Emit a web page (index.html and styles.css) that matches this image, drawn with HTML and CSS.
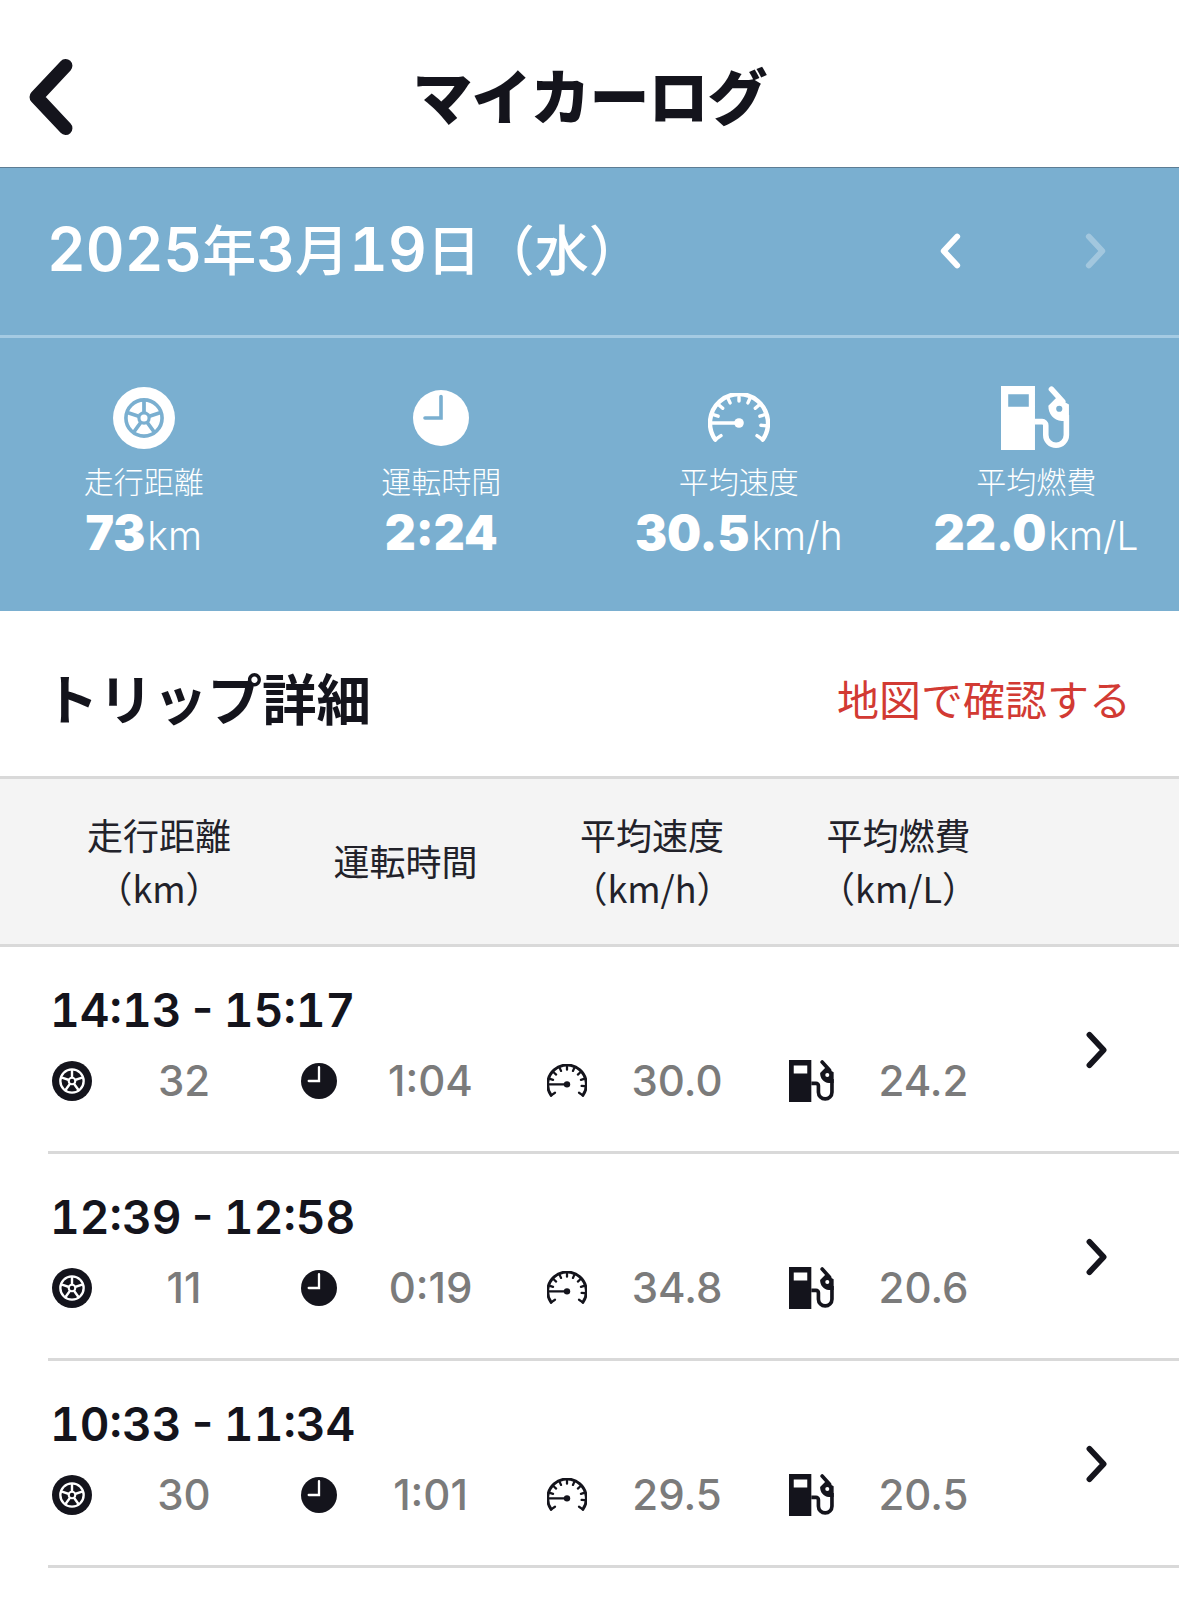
FILE: index.html
```html
<!DOCTYPE html>
<html lang="ja">
<head>
    <meta charset="UTF-8">
    <meta name="viewport" content="width=device-width, initial-scale=1.0">
    <title>マイカーログ</title>
    <link rel="stylesheet" href="styles.css">
</head>
<body>
    <svg class="sprite" width="0" height="0">
        <symbol id="i-tire" viewBox="0 0 60 60">
            <circle cx="30" cy="30" r="30" fill="currentColor"/>
            <circle cx="30" cy="30" r="17.5" fill="none" stroke="var(--bg)" stroke-width="3.5"/>
            <path d="M30 30V13M30 30L46.2 24.7M30 30L40 43.8M30 30L20 43.8M30 30L13.8 24.7" stroke="var(--bg)" stroke-width="3.6"/>
            <circle cx="30" cy="30" r="6.5" fill="var(--bg)"/>
            <circle cx="30" cy="30" r="3.4" fill="currentColor"/>
        </symbol>
        <symbol id="i-clock" viewBox="0 0 56 56">
            <circle cx="28" cy="28" r="28" fill="currentColor"/>
            <path d="M28 6.5V28H12" fill="none" stroke="var(--bg)" stroke-width="3.6" stroke-linecap="round"/>
        </symbol>
        <symbol id="i-gauge" viewBox="0 0 60 50">
            <g fill="none" stroke="currentColor" stroke-linecap="round">
                <path d="M6.2 46.6A29 29 0 1 1 53.8 46.6" stroke-width="4.4"/>
                <path d="M30 4V8M41 5.3L38.9 9.9M19 5.3L21.1 9.9M50.1 11.9L46.3 15.3M9.9 11.9L13.7 15.3M55.7 21.7L50.9 23.2M4.3 21.7L9.1 23.2M56.9 32.8L51.9 32.3M53.8 46.6L48 42.6M6.2 46.6L12 42.6" stroke-width="3.4"/>
                <path d="M2 30H30" stroke-width="3.6"/>
            </g>
            <circle cx="30" cy="30" r="4.8" fill="currentColor"/>
        </symbol>
        <symbol id="i-pump" viewBox="0 0 68 62">
            <path fill-rule="evenodd" fill="currentColor" d="M0 0H33V62H0ZM7 8V20H27V8Z"/>
            <path d="M33 34.5H40A3.5 3.5 0 0 1 43.5 38V47.5A10 10 0 0 0 63.5 47.5V28" fill="none" stroke="currentColor" stroke-width="5.4"/>
            <path d="M49 3L60 15" fill="none" stroke="currentColor" stroke-width="5.4" stroke-linecap="round"/>
            <path fill-rule="evenodd" fill="currentColor" d="M46 19L54 11L66 18V34H59C51 33 46 27 46 19ZM56.6 19A3 3 0 1 0 56.6 25A3 3 0 1 0 56.6 19Z"/>
        </symbol>
        <symbol id="i-left" viewBox="0 0 24 40">
            <path class="chevron" d="M20 4L5 20L20 36"/>
        </symbol>
        <symbol id="i-right" viewBox="0 0 24 40">
            <path class="chevron" d="M4 4L19 20L4 36"/>
        </symbol>
    </svg>

    <header class="app-bar">
        <svg class="back-icon"><use href="#i-left"/></svg>
        <h1>マイカーログ</h1>
    </header>

    <section class="summary">
        <div class="date-row">
            <div class="date">2025<span>年</span>3<span>月</span>19<span>日（水）</span></div>
            <svg class="date-nav"><use href="#i-left"/></svg>
            <svg class="date-nav is-off"><use href="#i-right"/></svg>
        </div>
        <div class="stats">
            <div class="stat">
                <div class="stat-icon"><svg class="s-tire"><use href="#i-tire"/></svg></div>
                <div class="stat-label">走行距離</div>
                <div class="stat-value">73<span>km</span></div>
            </div>
            <div class="stat">
                <div class="stat-icon"><svg class="s-clock"><use href="#i-clock"/></svg></div>
                <div class="stat-label">運転時間</div>
                <div class="stat-value">2:24</div>
            </div>
            <div class="stat">
                <div class="stat-icon"><svg class="s-gauge"><use href="#i-gauge"/></svg></div>
                <div class="stat-label">平均速度</div>
                <div class="stat-value">30.5<span>km/h</span></div>
            </div>
            <div class="stat">
                <div class="stat-icon"><svg class="s-pump"><use href="#i-pump"/></svg></div>
                <div class="stat-label">平均燃費</div>
                <div class="stat-value">22.0<span>km/L</span></div>
            </div>
        </div>
    </section>

    <div class="section-head">
        <h2>トリップ詳細</h2>
        <a class="map-link">地図で確認する</a>
    </div>

    <div class="table-head">
        <div>走行距離<br>（km）</div>
        <div>運転時間</div>
        <div>平均速度<br>（km/h）</div>
        <div>平均燃費<br>（km/L）</div>
    </div>

    <div class="trip">
        <div class="trip-body">
            <div class="trip-time">14:13 - 15:17</div>
            <div class="metrics">
                <div class="metric"><svg class="m-tire"><use href="#i-tire"/></svg><span>32</span></div>
                <div class="metric"><svg class="m-clock"><use href="#i-clock"/></svg><span>1:04</span></div>
                <div class="metric"><svg class="m-gauge"><use href="#i-gauge"/></svg><span>30.0</span></div>
                <div class="metric"><svg class="m-pump"><use href="#i-pump"/></svg><span>24.2</span></div>
            </div>
        </div>
        <svg class="trip-arrow"><use href="#i-right"/></svg>
    </div>
    <div class="trip">
        <div class="trip-body">
            <div class="trip-time">12:39 - 12:58</div>
            <div class="metrics">
                <div class="metric"><svg class="m-tire"><use href="#i-tire"/></svg><span>11</span></div>
                <div class="metric"><svg class="m-clock"><use href="#i-clock"/></svg><span>0:19</span></div>
                <div class="metric"><svg class="m-gauge"><use href="#i-gauge"/></svg><span>34.8</span></div>
                <div class="metric"><svg class="m-pump"><use href="#i-pump"/></svg><span>20.6</span></div>
            </div>
        </div>
        <svg class="trip-arrow"><use href="#i-right"/></svg>
    </div>
    <div class="trip">
        <div class="trip-body">
            <div class="trip-time">10:33 - 11:34</div>
            <div class="metrics">
                <div class="metric"><svg class="m-tire"><use href="#i-tire"/></svg><span>30</span></div>
                <div class="metric"><svg class="m-clock"><use href="#i-clock"/></svg><span>1:01</span></div>
                <div class="metric"><svg class="m-gauge"><use href="#i-gauge"/></svg><span>29.5</span></div>
                <div class="metric"><svg class="m-pump"><use href="#i-pump"/></svg><span>20.5</span></div>
            </div>
        </div>
        <svg class="trip-arrow"><use href="#i-right"/></svg>
    </div>
</body>
</html>
```

FILE: styles.css
```css
body {
    margin: 0;
    height: 1608px;
    overflow: hidden;
    background: #fff;
    color: #14141c;
    font-family: Inter, "Noto Sans CJK JP", sans-serif;
    --bg: #fff;
}
.sprite {
    position: absolute;
}
.chevron {
    fill: none;
    stroke: currentColor;
    stroke-width: var(--chevron-width, 6);
    stroke-linecap: round;
    stroke-linejoin: round;
}
.app-bar {
    height: 168px;
    box-sizing: border-box;
    padding-top: 58px;
    position: relative;
    border-bottom: 1px solid #5d7d94;
}
.back-icon {
    position: absolute;
    left: 22px;
    top: 58px;
    width: 56px;
    height: 78px;
    --chevron-width: 7;
}
h1 {
    margin: 0;
    text-align: center;
    font-family: "Noto Sans CJK JP", sans-serif;
    font-size: 60px;
    font-weight: 900;
    line-height: 72px;
    letter-spacing: -1px;
}
.summary {
    height: 443px;
    background: #7aafd0;
    color: #fff;
    --bg: #7aafd0;
}
.date-row {
    height: 170px;
    box-sizing: border-box;
    padding: 0 69px 2px 47px;
    display: flex;
    align-items: center;
    border-bottom: 3px solid #a5cbe3;
}
.date {
    flex: 1;
    margin-bottom: 6px;
    font-size: 60px;
    font-weight: 600;
    font-variant-numeric: tabular-nums;
}
.date span {
    font-family: "Noto Sans CJK JP", sans-serif;
    font-size: 54px;
    font-weight: 500;
}
.date-nav {
    width: 28px;
    height: 36px;
    margin-left: 118px;
    --chevron-width: 6.5;
}
.date-nav.is-off {
    opacity: 0.3;
}
.stats {
    display: grid;
    grid-template-columns: repeat(4, 297.5px);
    margin-left: -5px;
    padding-top: 45px;
}
.stat {
    text-align: center;
}
.stat-icon {
    height: 70px;
    display: flex;
    align-items: center;
    justify-content: center;
}
.s-tire {
    width: 62px;
    height: 62px;
}
.s-clock {
    width: 56px;
    height: 56px;
}
.s-gauge {
    width: 62px;
    height: 50px;
}
.s-pump {
    width: 70px;
    height: 64px;
}
.stat-label {
    margin-top: 7px;
    font-family: "Noto Sans CJK JP", sans-serif;
    font-size: 30px;
    font-weight: 300;
    line-height: 40px;
}
.stat-value {
    margin-top: 5px;
    font-size: 48px;
    font-weight: 900;
    line-height: 56px;
    white-space: nowrap;
}
.stat-value span {
    margin-left: 2px;
    font-size: 39px;
    font-weight: 300;
}
.section-head {
    height: 165px;
    box-sizing: border-box;
    padding: 6px 48px 0 44px;
    display: flex;
    align-items: center;
    justify-content: space-between;
    font-family: "Noto Sans CJK JP", sans-serif;
}
h2 {
    margin: 0;
    font-size: 54.5px;
    font-weight: 700;
}
.map-link {
    color: #d23a33;
    font-size: 42px;
    font-weight: 400;
    padding-top: 2px;
}
.table-head {
    height: 171px;
    box-sizing: border-box;
    padding: 0 0 2px 48px;
    display: grid;
    grid-template-columns: repeat(4, 222px);
    column-gap: 24.5px;
    align-items: center;
    text-align: center;
    background: #f4f4f4;
    border-top: 3px solid #d9d9d9;
    border-bottom: 3px solid #d9d9d9;
    font-family: "Noto Sans CJK JP", sans-serif;
    font-size: 36px;
    line-height: 53px;
    font-weight: 400;
    color: #22222a;
}
.trip {
    height: 207px;
    box-sizing: border-box;
    margin-left: 48px;
    display: flex;
    align-items: center;
    border-bottom: 3px solid #d9d9d9;
}
.trip-body {
    flex: 1;
    padding-bottom: 10px;
}
.trip-time {
    margin-left: 2px;
    font-size: 46px;
    font-weight: 600;
    font-variant-numeric: tabular-nums;
    word-spacing: -6px;
    line-height: 58px;
}
.metrics {
    margin-top: 15px;
    display: grid;
    grid-template-columns: repeat(4, 246.5px);
}
.metric {
    display: grid;
    grid-template-columns: 48px 176px;
    align-items: center;
    justify-items: center;
    height: 54px;
}
.metric span {
    color: #7b7b7b;
    font-size: 42px;
    font-weight: 500;
    line-height: 54px;
}
.m-tire {
    width: 40px;
    height: 40px;
}
.m-clock {
    width: 36px;
    height: 36px;
}
.m-gauge {
    width: 40px;
    height: 34px;
    margin-left: 3px;
}
.m-pump {
    width: 46px;
    height: 42px;
}
.trip-arrow {
    width: 28px;
    height: 38px;
    margin-right: 68px;
    margin-top: 2px;
}
```
